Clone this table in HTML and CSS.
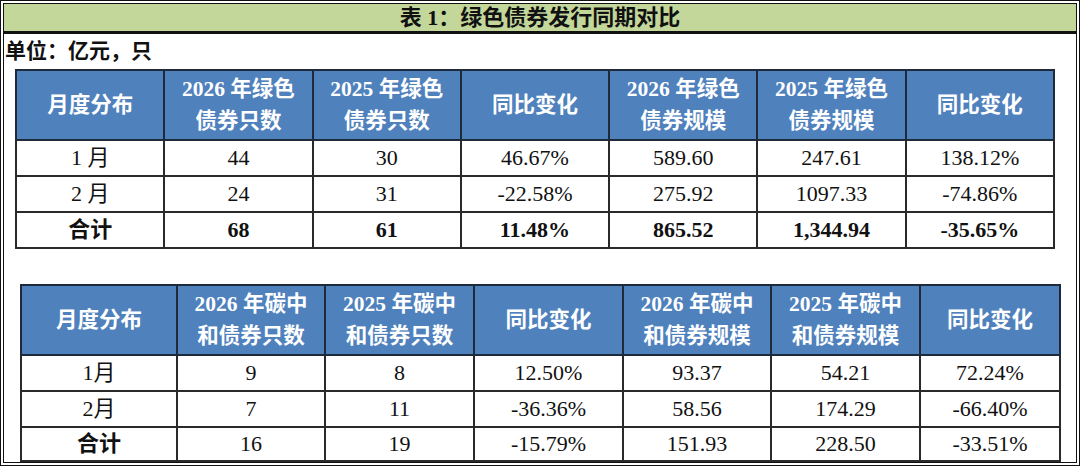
FILE: index.html
```html
<!DOCTYPE html>
<html lang="zh-CN">
<head>
<meta charset="utf-8">
<title>表1：绿色债券发行同期对比</title>
<link rel="stylesheet" href="styles.css">
</head>
<body>
<div class="frame">
  <div class="title">表 1：绿色债券发行同期对比</div>
  <div class="unit">单位：亿元，只</div>
  <table class="grid grid-green">
    <tr class="head">
      <td>月度分布</td>
      <td>2026 年绿色<br>债券只数</td>
      <td>2025 年绿色<br>债券只数</td>
      <td>同比变化</td>
      <td>2026 年绿色<br>债券规模</td>
      <td>2025 年绿色<br>债券规模</td>
      <td>同比变化</td>
    </tr>
    <tr>
      <td>1 月</td><td>44</td><td>30</td><td>46.67%</td><td>589.60</td><td>247.61</td><td>138.12%</td>
    </tr>
    <tr>
      <td>2 月</td><td>24</td><td>31</td><td>-22.58%</td><td>275.92</td><td>1097.33</td><td>-74.86%</td>
    </tr>
    <tr class="total bold">
      <td>合计</td><td>68</td><td>61</td><td>11.48%</td><td>865.52</td><td>1,344.94</td><td>-35.65%</td>
    </tr>
  </table>
  <table class="grid grid-carbon">
    <colgroup>
      <col class="c1"><col class="c2"><col class="c3"><col class="c4"><col class="c5"><col class="c6"><col class="c7">
    </colgroup>
    <tr class="head">
      <td>月度分布</td>
      <td>2026 年碳中<br>和债券只数</td>
      <td>2025 年碳中<br>和债券只数</td>
      <td>同比变化</td>
      <td>2026 年碳中<br>和债券规模</td>
      <td>2025 年碳中<br>和债券规模</td>
      <td>同比变化</td>
    </tr>
    <tr>
      <td>1月</td><td>9</td><td>8</td><td>12.50%</td><td>93.37</td><td>54.21</td><td>72.24%</td>
    </tr>
    <tr>
      <td>2月</td><td>7</td><td>11</td><td>-36.36%</td><td>58.56</td><td>174.29</td><td>-66.40%</td>
    </tr>
    <tr class="total last">
      <td class="cjk-bold">合计</td><td>16</td><td>19</td><td>-15.79%</td><td>151.93</td><td>228.50</td><td>-33.51%</td>
    </tr>
  </table>
</div>
</body>
</html>
```
FILE: styles.css
```css
html, body {
  margin: 0;
  padding: 0;
  background: #ffffff;
}

body {
  font-family: "Liberation Serif", "Noto Sans CJK SC", serif;
  color: #111;
}

.frame {
  width: 1080px;
  height: 466px;
  box-sizing: border-box;
  border: 4px double #111;
  overflow: hidden;
}

.title {
  height: 27px;
  background: #c4d79b;
  border-bottom: 3px solid #111;
  text-align: center;
  font-weight: bold;
  font-size: 22px;
  line-height: 27px;
  color: #111;
}

.unit {
  height: 35px;
  line-height: 34px;
  padding-left: 1px;
  font-weight: bold;
  font-size: 21px;
}

.grid {
  border-collapse: collapse;
  table-layout: fixed;
}

.grid td {
  border: 2px solid #2a2a2a;
  text-align: center;
  vertical-align: middle;
  padding: 0;
  font-size: 22px;
  height: 34px;
  line-height: 26px;
}

.grid .head td {
  background: #4f81bd;
  color: #ffffff;
  font-weight: bold;
  font-size: 21.5px;
  line-height: 32px;
  height: 68px;
  border-color: #1e2a3a;
}

.grid-green {
  width: 1040px;
  margin-left: 11px;
}

.grid-carbon {
  width: 1039px;
  margin-left: 16px;
  margin-top: 35px;
}

.grid-carbon .last td {
  height: 32px;
}

.c1 { width: 156px; }
.c2 { width: 148px; }
.c3 { width: 149px; }
.c4 { width: 149px; }
.c5 { width: 148px; }
.c6 { width: 149px; }
.c7 { width: 140px; }

.bold td {
  font-weight: bold;
}

.cjk-bold {
  font-weight: bold;
}
```
